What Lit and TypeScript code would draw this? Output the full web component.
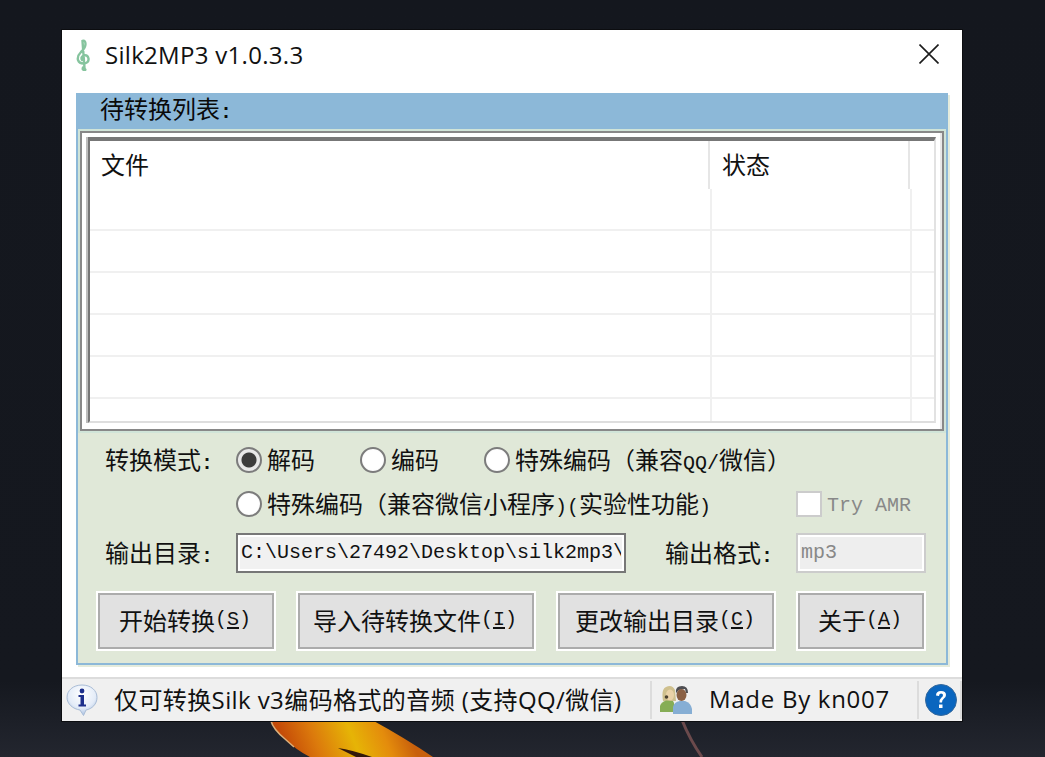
import { LitElement, html, css } from "lit";
import { customElement } from "lit/decorators.js";

const PATH = "C:\\Users\\27492\\Desktop\\silk2mp3\\";

@customElement("app-root")
export class AppRoot extends LitElement {
  static styles = css`
    :host {
      display: block;
      position: relative;
      width: 1045px;
      height: 757px;
      box-sizing: border-box;
      padding: 30px 0 0 62px;
      overflow: hidden;
      background: linear-gradient(#14171e 0%, #15181f 90%, #23262f 100%);
      font-family: "Liberation Mono", "Noto Sans CJK SC", monospace;
      font-size: 24px;
      color: #111;
    }
    .wall { position: absolute; left: 0; top: 0; width: 1045px; height: 757px; }
    .window {
      position: relative;
      width: 900px;
      height: 691px;
      display: flex;
      flex-direction: column;
      background: #fff;
      box-shadow: 0 0 0 1px #0c0d10;
    }
    .title {
      height: 63px;
      display: flex;
      align-items: flex-start;
      padding: 9px 23px 0 14px;
      box-sizing: border-box;
      font-family: "Open Sans", "Noto Sans", sans-serif;
      font-size: 24px;
      color: #111;
    }
    .title .name { margin-left: 13px; line-height: 32px; letter-spacing: 0.3px; flex: 1; }
    .clef { filter: blur(0.5px); }
    .close { margin-top: 5px; }
    .panel {
      width: 872px;
      margin-left: 14px;
      height: 572px;
      box-sizing: border-box;
      border: 2px solid #8cb8d8;
      border-top: 0;
      background: #e0e8d8;
      box-shadow: 2px 2px 0 0 #e4ebdc;
      display: flex;
      flex-direction: column;
    }
    .head {
      height: 36px;
      margin: 0 -2px;
      background: #8cb8d8;
      padding-left: 24px;
      line-height: 37px;
      color: #0a0a0a;
      flex: none;
    }
    .lat { font-size: 20px; font-family: "Liberation Mono", monospace; }
    .colon { font-weight: 700; }
    .frame {
      flex: none;
      height: 300px;
      margin: 2px 2px 0;
      box-sizing: border-box;
      border: 2px solid #888;
      background: #fff;
      padding: 4px 6px 6px 4px;
      box-shadow: 0 0 0 2px #d0e4d8, inset -2px 0 0 #e8e8e8;
    }
    .list {
      height: 100%;
      margin-left: 2px;
      box-sizing: border-box;
      border-top: 4px solid #777;
      border-left: 2px solid #777;
      border-right: 2px solid #e2e2e2;
      border-bottom: 2px solid #dedede;
      box-shadow: -2px 0 0 #bdbdbd;
      display: flex;
      flex-direction: column;
      overflow: hidden;
    }
    .hrow { height: 48px; flex: none; display: flex; }
    .hcell {
      box-sizing: border-box;
      border-right: 2px solid #e6e6e6;
      padding-left: 11px;
      line-height: 54px;
      font-size: 24px;
      flex: none;
    }
    .hcell.file { width: 620px; }
    .hcell.state { width: 200px; padding-left: 12px; }
    .row { height: 42px; flex: none; display: flex; box-sizing: border-box; border-bottom: 2px solid #f0f0f0; }
    .cell { box-sizing: border-box; border-right: 2px solid #f0f0f0; flex: none; }
    .cell.file { width: 622px; }
    .cell.state { width: 200px; }
    .form {
      flex: 1;
      box-sizing: border-box;
      padding: 16px 20px 12px 18px;
      display: flex;
      flex-direction: column;
    }
    .line { display: flex; align-items: center; padding-left: 9px; }
    .l1 { height: 26px; }
    .l2 { height: 26px; margin-top: 18px; }
    .l3 { height: 40px; margin-top: 16px; }
    .label { width: 131px; flex: none; padding-bottom: 4px; }
    .opt { display: flex; align-items: center; gap: 6px; width: 124px; flex: none; white-space: nowrap; }
    .opt.wide { width: auto; }
    .t { padding-bottom: 4px; margin-left: -1px; }
    .radio {
      width: 26px;
      height: 26px;
      flex: none;
      box-sizing: border-box;
      border-radius: 50%;
      border: 2px solid #7c7c7c;
      background: radial-gradient(circle, #fff 0 60%, #eee 100%);
    }
    .radio.on { background: radial-gradient(circle, #3c3c3c 0 7px, #e6e6e6 8px, #f4f4f4 100%); }
    .try { margin-left: auto; width: 130px; display: flex; align-items: center; gap: 5px; color: #888; font-size: 20px; flex: none; white-space: pre; }
    .try .tx { padding-top: 2px; }
    .check { width: 26px; height: 26px; box-sizing: border-box; border: 2px solid #ccc; background: #fff; flex: none; }
    .field {
      height: 40px;
      box-sizing: border-box;
      font-size: 20px;
      line-height: 35px;
      overflow: hidden;
      white-space: pre;
      flex: none;
    }
    .path { width: 390px; border: 2px solid #777; padding: 0 3px; background: #f1f1f1; box-shadow: inset 0 0 0 2px #fff; }
    .path span { display: block; width: 380px; overflow: hidden; }
    .label2 { width: 131px; margin-left: 39px; flex: none; padding-bottom: 4px; }
    .fmt { width: 130px; border: 2px solid #ccc; padding: 0 3px; background: #eee; box-shadow: inset 0 0 0 2px #fff; color: #888; }
    .buttons { display: flex; gap: 20px; margin-top: 18px; height: 60px; }
    .btn {
      box-sizing: border-box;
      height: 60px;
      padding: 0 2px 4px 0;
      border: 2px solid #fff;
      box-shadow: inset 0 0 0 2px #acacac;
      background: #e1e1e1;
      display: flex;
      align-items: center;
      justify-content: center;
      flex: none;
      white-space: pre;
      color: #111;
    }
    .btn u { text-underline-offset: 2px; }
    .b1 { width: 180px; }
    .b2 { width: 240px; }
    .b3 { width: 220px; }
    .b4 { width: 130px; }
    .status {
      margin-top: 12px;
      flex: 1;
      box-sizing: border-box;
      border-top: 2px solid #dcdcdc;
      background: #f0f0f0;
      display: flex;
      align-items: center;
      font-family: "Open Sans", "Noto Sans CJK SC", sans-serif;
      font-size: 24px;
      color: #111;
      white-space: pre;
    }
    .status .ico { flex: none; }
    .txt { padding-bottom: 3px; }
    .st1 { display: flex; align-items: center; width: 590px; height: 38px; padding-left: 4px; box-sizing: border-box; border-right: 2px solid #dcdcdc; flex: none; }
    .st1 .txt { margin-left: 16px; letter-spacing: 0.4px; }
    .st2 { display: flex; align-items: center; width: 267px; height: 38px; padding-left: 8px; box-sizing: border-box; border-right: 2px solid #dcdcdc; flex: none; }
    .st2 .txt { margin-left: 17px; letter-spacing: 0.72px; }
    .st3 { display: flex; align-items: center; padding-left: 6px; height: 38px; box-sizing: border-box; flex: 1; border-right: 2px solid #dcdcdc; }
    .users { filter: blur(0.6px); }
  `;

  private wall() {
    return html`<svg class="wall" viewBox="0 0 1045 757" aria-hidden="true">
      <defs>
        <linearGradient id="fire" gradientUnits="userSpaceOnUse" x1="290" y1="757" x2="400" y2="712">
          <stop offset="0" stop-color="#c44a08" />
          <stop offset="0.25" stop-color="#dc7a0c" />
          <stop offset="0.55" stop-color="#e6b406" />
          <stop offset="0.8" stop-color="#e48c0c" />
          <stop offset="1" stop-color="#c8600c" />
        </linearGradient>
      </defs>
      <path d="M271 720 Q272 728 284 738 Q296 750 310 757 L433 757 Q405 738 372 720 Z" fill="url(#fire)" stroke="none" />
      <path d="M271 721 Q273 729 285 739 L294 747" fill="none" stroke="#dcb07a" stroke-width="1.500" />
      <path d="M338 748 Q352 750 372 757 L356 757 Z" fill="#33190c" />
      <path d="M682 720 Q690 740 702 757" fill="none" stroke="#6b4a4c" stroke-width="3" />
    </svg>`;
  }

  private clef() {
    return html`<svg class="clef" width="16" height="32" viewBox="0 0 16 32" aria-hidden="true">
      <path d="M9 30 Q10 31 8.500 31 Q6 31 7 28.500 M8.500 29 L6.500 2 Q9.500 1 9.500 5 Q9.500 9 5 13 Q1 17 2 21 Q3.500 25 8.500 24.500 Q13 23.500 12.500 19.500 Q11.500 15.500 7.500 16.500 Q4.500 18 6 21"
        fill="none" stroke="#86c49e" stroke-width="2.400" stroke-linecap="round" />
    </svg>`;
  }

  private info() {
    return html`<svg class="ico" width="32" height="32" viewBox="0 0 32 32" aria-hidden="true">
      <defs>
        <radialGradient id="bub" cx="0.5" cy="0.3" r="0.75">
          <stop offset="0" stop-color="#fff" />
          <stop offset="0.6" stop-color="#e4ecf8" />
          <stop offset="1" stop-color="#9db8dc" />
        </radialGradient>
      </defs>
      <path d="M16 1 C25 1 31 6.500 31 13.500 C31 20 26 25 20 26 L17.500 31.500 L14 26 C7 25 1 20 1 13.500 C1 6.500 7 1 16 1 Z" fill="url(#bub)" stroke="#a9bcd6" stroke-width="1" />
      <circle cx="16" cy="7" r="2.400" fill="#1c2f8c" />
      <path d="M12.500 11 L18 11 L18 20.500 L20 20.500 L20 22.500 L12.500 22.500 L12.500 20.500 L14.500 20.500 L14.500 13 L12.500 13 Z" fill="#1c2f8c" />
    </svg>`;
  }

  private users() {
    return html`<svg class="ico users" width="32" height="30" viewBox="0 0 32 30" aria-hidden="true">
      <path d="M3 16 Q1 4 6 2 Q12 -1 15 5 L16 16 Z" fill="#cfc08e" />
      <ellipse cx="10" cy="10" rx="4" ry="5.500" fill="#ead2a8" />
      <circle cx="6.500" cy="12" r="1.800" fill="#4a4030" />
      <path d="M0 27 L0 21 Q1 17 6 15.500 L13 16 Q15 18 14 27 Z" fill="#86ad56" />
      <path d="M16 8 Q15 1 22 1 Q28 1 28 8 L26 8 L25 4 L19 5 Z" fill="#4e4e52" />
      <ellipse cx="21.500" cy="10" rx="5" ry="6" fill="#8a6044" />
      <path d="M13 29 L13 22 Q14 17 20 16 L25 16 Q31 18 32 24 L32 29 Z" fill="#86aed4" />
    </svg>`;
  }

  private help() {
    return html`<svg class="ico" width="32" height="32" viewBox="0 0 32 32" aria-hidden="true">
      <circle cx="16" cy="16" r="15.500" fill="#0a66bf" stroke="#34689c" stroke-width="1" />
      <path d="M11 11.500 Q11 7 16 7 Q21 7 21 11 Q21 13.500 18.500 15 Q17 16 17 18.500 L14.500 18.500 Q14.500 15 16.500 13.500 Q18 12.500 18 11 Q18 9.500 16 9.500 Q14 9.500 14 12 Z" fill="#fff" />
      <rect x="14" y="20.500" width="3.500" height="3.500" fill="#fff" />
    </svg>`;
  }

  private radio(on: boolean) {
    return html`<span class="radio ${on ? "on" : ""}"></span>`;
  }

  render() {
    const rows = [0, 1, 2, 3, 4, 5];
    const colon = html`<span class="lat colon">:</span>`;
    return html`
      ${this.wall()}
      <div class="window">
        <div class="title">
          ${this.clef()}
          <span class="name">Silk2MP3 v1.0.3.3</span>
          <svg class="close" width="20" height="20" viewBox="0 0 20 20" aria-hidden="true">
            <path d="M0.500 0.500 L19.500 19.500 M19.500 0.500 L0.500 19.500" stroke="#1c1c1c" stroke-width="1.600" fill="none" />
          </svg>
        </div>
        <div class="panel">
          <div class="head">待转换列表${colon}</div>
          <div class="frame">
            <div class="list">
              <div class="hrow">
                <div class="hcell file">文件</div>
                <div class="hcell state">状态</div>
              </div>
              ${rows.map(
                () => html`<div class="row"><div class="cell file"></div><div class="cell state"></div></div>`
              )}
            </div>
          </div>
          <div class="form">
            <div class="line l1">
              <span class="label">转换模式${colon}</span>
              <label class="opt">${this.radio(true)}<span class="t">解码</span></label>
              <label class="opt">${this.radio(false)}<span class="t">编码</span></label>
              <label class="opt wide">${this.radio(false)}<span class="t">特殊编码（兼容<span class="lat">QQ/</span>微信）</span></label>
            </div>
            <div class="line l2">
              <span class="label"></span>
              <label class="opt wide">${this.radio(false)}<span class="t">特殊编码（兼容微信小程序<span class="lat">)(</span>实验性功能<span class="lat">)</span></span></label>
              <span class="try"><span class="check"></span><span class="tx">Try AMR</span></span>
            </div>
            <div class="line l3">
              <span class="label">输出目录${colon}</span>
              <div class="field path"><span>${PATH}</span></div>
              <span class="label2">输出格式${colon}</span>
              <div class="field fmt">mp3</div>
            </div>
            <div class="buttons">
              <div class="btn b1">开始转换<span class="lat">(<u>S</u>)</span></div>
              <div class="btn b2">导入待转换文件<span class="lat">(<u>I</u>)</span></div>
              <div class="btn b3">更改输出目录<span class="lat">(<u>C</u>)</span></div>
              <div class="btn b4">关于<span class="lat">(<u>A</u>)</span></div>
            </div>
          </div>
        </div>
        <div class="status">
          <div class="st1">${this.info()}<span class="txt">仅可转换Silk v3编码格式的音频 (支持QQ/微信)</span></div>
          <div class="st2">${this.users()}<span class="txt">Made By kn007</span></div>
          <div class="st3">${this.help()}</div>
        </div>
      </div>
    `;
  }
}
